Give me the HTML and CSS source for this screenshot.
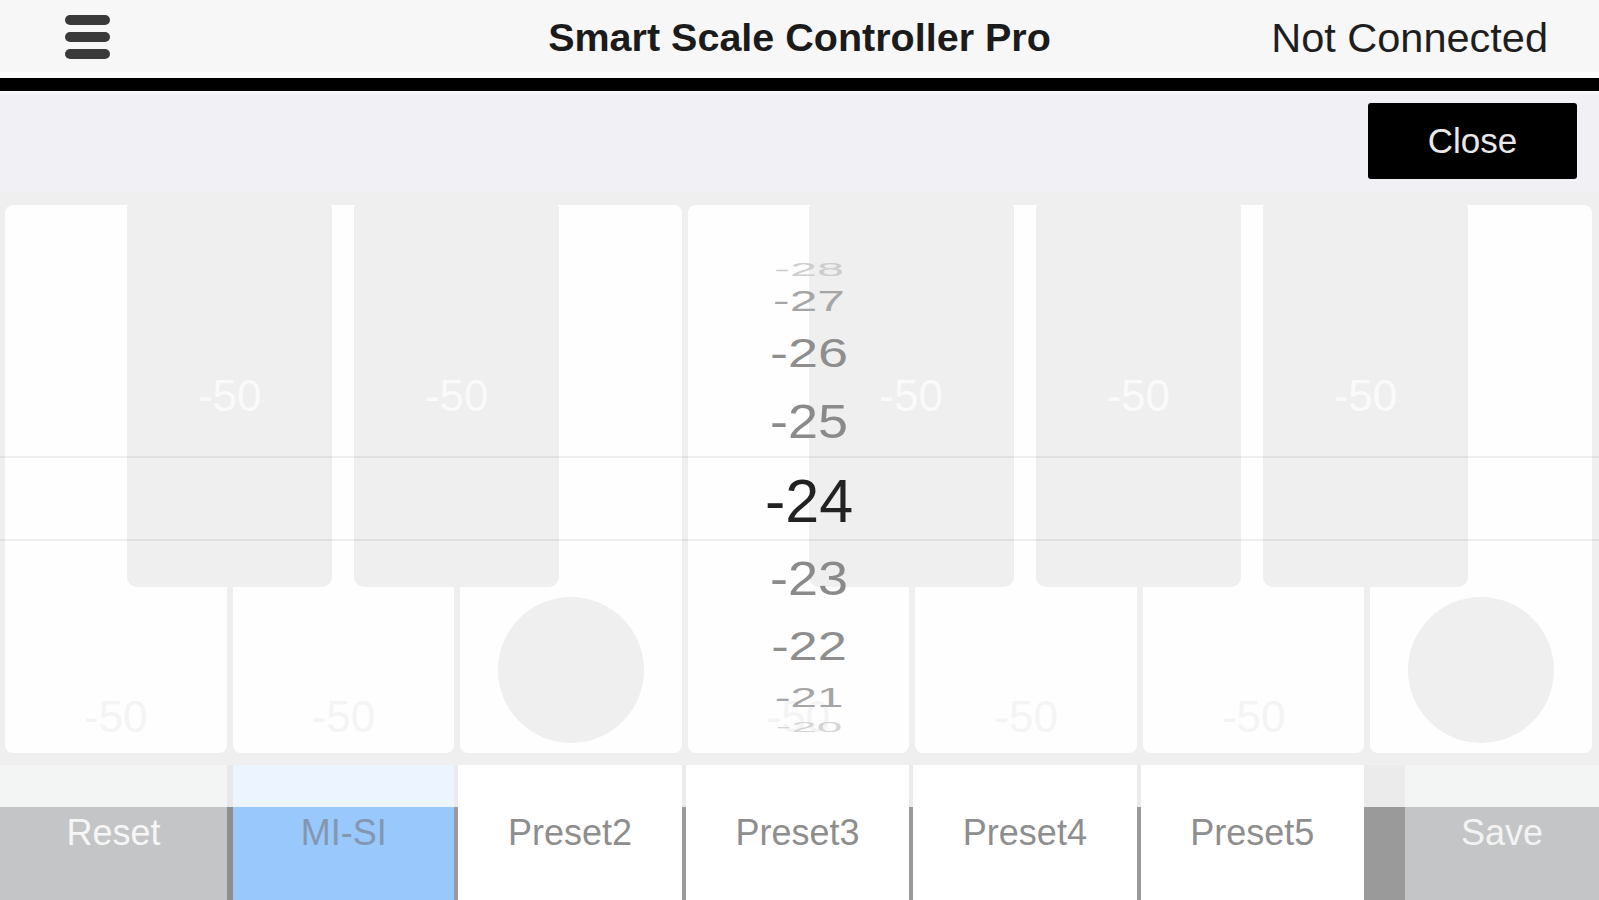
FILE: index.html
```html
<!DOCTYPE html>
<html lang="en">
<head>
<meta charset="utf-8">
<title>Smart Scale Controller Pro</title>
<link rel="stylesheet" href="styles.css">
</head>
<body>
<header class="topbar">
  <div class="menu" aria-label="Menu"><span></span><span></span><span></span></div>
  <h1 class="title">Smart Scale Controller Pro</h1>
  <div class="status">Not Connected</div>
</header>
<div class="rule"></div>
<main class="stage">
  <section class="board">
    <div class="layer cards">
      <div class="card"><span class="val">-50</span></div>
      <div class="card"><span class="val">-50</span></div>
      <div class="card"><span class="knob"></span></div>
      <div class="card"><span class="val">-50</span></div>
      <div class="card"><span class="val">-50</span></div>
      <div class="card"><span class="val">-50</span></div>
      <div class="card"><span class="knob"></span></div>
    </div>
    <div class="layer sliders">
      <div class="slider"><span>-50</span></div>
      <div class="slider"><span>-50</span></div>
      <div class="slider is-hidden"></div>
      <div class="slider"><span>-50</span></div>
      <div class="slider"><span>-50</span></div>
      <div class="slider"><span>-50</span></div>
    </div>
  </section>
  <nav class="presets">
    <div class="pbtn reset">Reset</div>
    <div class="pbtn sel">MI-SI</div>
    <div class="pbtn">Preset2</div>
    <div class="pbtn">Preset3</div>
    <div class="pbtn">Preset4</div>
    <div class="pbtn">Preset5</div>
    <div class="pdark"></div>
    <div class="pbtn save">Save</div>
  </nav>
  <div class="modal">
    <div class="toolbar"><div class="close">Close</div></div>
    <div class="picker">
      <div class="band"></div>
      <div class="wheel">
        <div class="num n-4">-28</div>
        <div class="num n-3">-27</div>
        <div class="num n-2">-26</div>
        <div class="num n-1">-25</div>
        <div class="num n0">-24</div>
        <div class="num n1">-23</div>
        <div class="num n2">-22</div>
        <div class="num n3">-21</div>
        <div class="num n4">-20</div>
      </div>
    </div>
  </div>
</main>
</body>
</html>
```
FILE: styles.css
```css
* { box-sizing: border-box; }
html, body {
  margin: 0;
  padding: 0;
}
body {
  width: 1599px;
  height: 900px;
  overflow: hidden;
  font-family: "Liberation Sans", Arial, sans-serif;
  background: #efefef;
}

/* ---------- header ---------- */
.topbar {
  height: 72px;
  background: #f7f7f7;
  display: grid;
  grid-template-columns: 1fr auto 1fr;
  align-items: center;
  padding: 3px 51px 0 51px;
}
.menu {
  display: flex;
  flex-direction: column;
  gap: 7px;
  width: 45px;
  margin-left: 14px;
  margin-top: -2px;
  justify-self: start;
}
.menu span {
  display: block;
  height: 10px;
  border-radius: 5px;
  background: #3a3a3a;
}
.title {
  margin: 0;
  font-size: 39.5px;
  font-weight: bold;
  color: #1b1b1b;
  line-height: 1;
  white-space: nowrap;
}
.status {
  justify-self: end;
  font-size: 41.5px;
  color: #1e1e1e;
  line-height: 1;
  white-space: nowrap;
}
.rule {
  height: 22px;
  background: #000;
  border-top: 6px solid #fcfcfc;
  border-bottom: 3px solid #f8f8f8;
}

/* ---------- stage ---------- */
.stage {
  position: relative;
  height: 806px;
  display: flex;
  flex-direction: column;
}
.board {
  height: 671px;
  padding: 111px 0 12px;
  background: #efefef;
  display: grid;
  grid-template: 1fr / 1fr;
}
.layer {
  grid-area: 1 / 1;
  display: grid;
  column-gap: 6px;
}
.cards {
  grid-template-columns: repeat(7, 1fr);
  padding: 0 7px 0 5px;
}
.card {
  background: #fefefe;
  border-radius: 8px;
  display: flex;
  flex-direction: column;
  justify-content: flex-end;
  align-items: center;
}
.val {
  font-size: 44px;
  line-height: 50px;
  color: #f4f4f4;
  margin-bottom: 11px;
}
.knob {
  width: 146px;
  height: 146px;
  border-radius: 50%;
  background: #efefef;
  margin-bottom: 10px;
}
.sliders {
  grid-template-columns: repeat(6, 1fr);
  padding: 0 123px 0 119px;
  align-items: start;
}
.slider {
  height: 382px;
  margin: 0 8px;
  background: #efefef;
  border-radius: 3px 3px 10px 10px;
  display: flex;
  align-items: center;
  justify-content: center;
  font-size: 44px;
  color: #fafafa;
}
.slider.is-hidden { visibility: hidden; }

/* ---------- bottom bar ---------- */
.presets {
  position: relative;
  height: 135px;
  display: grid;
  grid-template-columns: 227px repeat(5, 1fr) 41px 194px;
}
.presets::after {
  content: "";
  position: absolute;
  left: 0;
  right: 0;
  top: 0;
  height: 42px;
  background: rgba(255, 255, 255, 0.8);
}
.pbtn {
  background: #fff;
  border-left: 4px solid #9a9a9a;
  font-size: 36px;
  line-height: 40px;
  padding-top: 48px;
  text-align: center;
  color: #8e8e8e;
  white-space: nowrap;
}
.pbtn.reset {
  border-left: 0;
  background: #c4c5c7;
  color: #f6f6f6;
}
.pbtn.sel {
  border-left: 6px solid #8e8e8e;
  background: #99c8fc;
  color: #8497b0;
}
.pbtn.save {
  border-left: 0;
  background: #c4c5c7;
  color: #f3f3f3;
}
.pdark { background: #9a9a9a; }

/* ---------- modal picker ---------- */
.modal {
  position: absolute;
  top: 0;
  left: 0;
  right: 0;
  height: 713px;
  display: flex;
  flex-direction: column;
}
.toolbar {
  height: 99px;
  background: #f1f1f5;
  display: flex;
  justify-content: flex-end;
  align-items: flex-start;
  padding: 9px 22px 0 0;
}
.close {
  width: 209px;
  height: 76px;
  background: #000;
  color: #e8e8e8;
  border-radius: 3px;
  font-size: 35px;
  display: flex;
  align-items: center;
  justify-content: center;
}
.picker {
  flex: 1;
  display: grid;
  place-items: center;
}
.band {
  grid-area: 1 / 1;
  width: 100%;
  height: 85px;
  margin-top: -3px;
  border-top: 2px solid rgba(0, 0, 0, 0.06);
  border-bottom: 2px solid rgba(0, 0, 0, 0.06);
}
.wheel {
  grid-area: 1 / 1;
  display: grid;
  place-items: center;
  padding-left: 19px;
}
.num {
  grid-area: 1 / 1;
  font-size: 54px;
  line-height: 1;
  color: #8a8a8a;
  white-space: nowrap;
}
.n-4 { transform: translateY(-230px) scale(0.9, 0.34); color: #cdcdcd; }
.n-3 { transform: translateY(-199px) scale(0.92, 0.54); color: #a6a6a6; }
.n-2 { transform: translateY(-147px) scale(1, 0.75); color: #8e8e8e; }
.n-1 { transform: translateY(-79px) scale(1, 0.88); }
.n0  { transform: translateY(1px); font-size: 61px; color: #222; }
.n1  { transform: translateY(78px) scale(1, 0.88); }
.n2  { transform: translateY(146px) scale(0.97, 0.75); color: #8e8e8e; }
.n3  { transform: translateY(197px) scale(0.88, 0.5); color: #a6a6a6; }
.n4  { transform: translateY(227px) scale(0.85, 0.26); color: #d4d4d4; }
```
